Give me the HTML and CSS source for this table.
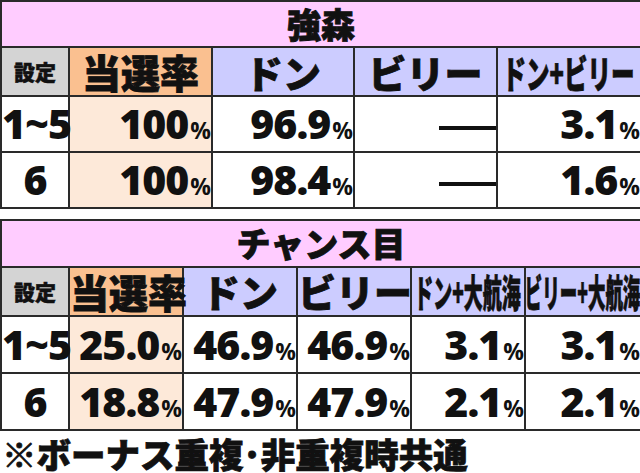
FILE: index.html
```html
<!DOCTYPE html>
<html lang="ja">
<head>
<meta charset="utf-8">
<link rel="stylesheet" href="styles.css">
</head>
<body>
<div class="page">
  <table class="tbl t1">
    <colgroup>
      <col class="c-set1"><col class="c-rate1"><col class="c-don1"><col class="c-bil1"><col class="c-db1">
    </colgroup>
    <tr class="r-title"><th colspan="5" class="title">強森</th></tr>
    <tr class="r-head">
      <th class="h-set">設定</th>
      <th class="h-rate">当選率</th>
      <th class="h-col">ドン</th>
      <th class="h-col">ビリー</th>
      <th class="h-col"><span class="sq sq1">ドン+ビリー</span></th>
    </tr>
    <tr class="r-data">
      <td class="set set-l">1~5</td>
      <td class="num rate r100">100<span class="pc">%</span></td>
      <td class="num">96.9<span class="pc">%</span></td>
      <td class="num dash"><span class="bar"></span></td>
      <td class="num">3.1<span class="pc">%</span></td>
    </tr>
    <tr class="r-data">
      <td class="set">6</td>
      <td class="num rate r100">100<span class="pc">%</span></td>
      <td class="num">98.4<span class="pc">%</span></td>
      <td class="num dash"><span class="bar"></span></td>
      <td class="num">1.6<span class="pc">%</span></td>
    </tr>
  </table>

  <table class="tbl t2">
    <colgroup>
      <col class="c-set2"><col class="c-rate2"><col class="c-don2"><col class="c-bil2"><col class="c-dk2"><col class="c-bk2">
    </colgroup>
    <tr class="r-title"><th colspan="6" class="title">チャンス目</th></tr>
    <tr class="r-head">
      <th class="h-set">設定</th>
      <th class="h-rate">当選率</th>
      <th class="h-col">ドン</th>
      <th class="h-col">ビリー</th>
      <th class="h-col"><span class="sq sq2">ドン+大航海</span></th>
      <th class="h-col"><span class="sq sq3">ビリー+大航海</span></th>
    </tr>
    <tr class="r-data">
      <td class="set set-l">1~5</td>
      <td class="num rate">25.0<span class="pc">%</span></td>
      <td class="num">46.9<span class="pc">%</span></td>
      <td class="num">46.9<span class="pc">%</span></td>
      <td class="num">3.1<span class="pc">%</span></td>
      <td class="num">3.1<span class="pc">%</span></td>
    </tr>
    <tr class="r-data">
      <td class="set">6</td>
      <td class="num rate">18.8<span class="pc">%</span></td>
      <td class="num">47.9<span class="pc">%</span></td>
      <td class="num">47.9<span class="pc">%</span></td>
      <td class="num">2.1<span class="pc">%</span></td>
      <td class="num">2.1<span class="pc">%</span></td>
    </tr>
  </table>

  <p class="note">※ボーナス重複･非重複時共通</p>
</div>
</body>
</html>
```

FILE: styles.css
```css
* { box-sizing: border-box; }
html, body { margin: 0; padding: 0; background: #fff; }
body {
  width: 640px;
  height: 473px;
  overflow: hidden;
  font-family: "Noto Sans CJK JP", "Noto Sans", sans-serif;
  color: #111;
}
.page {
  display: flex;
  flex-direction: column;
  gap: 10px;
}
.tbl {
  border-collapse: collapse;
  table-layout: fixed;
  width: 640px;
}
.tbl th, .tbl td {
  border: 2px solid #2a2a2a;
  padding: 0;
  white-space: nowrap;
}
.c-set1 { width: 68px; }
.c-rate1 { width: 143px; }
.c-don1 { width: 142px; }
.c-bil1 { width: 143px; }
.c-db1 { width: 144px; }

.c-set2 { width: 68px; }
.c-rate2 { width: 114px; }
.c-don2 { width: 114px; }
.c-bil2 { width: 114px; }
.c-dk2 { width: 114px; }
.c-bk2 { width: 116px; }

.title {
  background: #ffccff;
  font-weight: 900;
  font-size: 34px;
  line-height: 1.2;
  text-align: center;
  -webkit-text-stroke: 0.9px #111;
}
.t1 .r-title { height: 46px; }
.t2 .r-title { height: 47px; }
.r-head { height: 48px; }
.r-head th {
  font-weight: 900;
  line-height: 1.2;
  text-align: center;
  -webkit-text-stroke: 0.8px #111;
}
.h-set {
  background: #d4d4d4;
  font-size: 21px;
}
.r-head .h-set { -webkit-text-stroke: 0.5px #111; }
.h-rate {
  background: #fac090;
  font-size: 39px;
}
.h-col {
  background: #ccccff;
  font-size: 38px;
}
.sq {
  display: inline-block;
  transform-origin: center;
}
.sq1 { transform: scaleX(0.62); margin: 0 -42px; }
.sq2 { transform: scaleX(0.5); margin: 0 -62px; }
.sq3 { transform: scaleX(0.46); margin: 0 -72px; }

.t1 .r-data { height: 56px; }
.t2 .r-data { height: 57px; }
.r-data td {
  font-family: "Open Sans", "Noto Sans", sans-serif;
  font-weight: 800;
  font-size: 41px;
  line-height: 1.2;
  letter-spacing: -1px;
}
.set { text-align: center; background: #fff; }
.set-l { text-align: left; padding-left: 0; letter-spacing: -3px; }
.num {
  text-align: right;
  padding-right: 6px;
  background: #fff;
}
.rate { background: #fde9d9; }
.r100 { padding-right: 10px; }
.pc {
  font-size: 23px;
  font-weight: 700;
  letter-spacing: 0;
  margin-left: 2px;
}
.dash { padding-right: 16px; }
.bar {
  display: inline-block;
  width: 57px;
  height: 4px;
  background: #111;
  vertical-align: middle;
}
.note {
  margin: -10px 0 0 0;
  font-weight: 900;
  font-size: 34.5px;
  line-height: 44px;
  padding-left: 2px;
  letter-spacing: 0;
  -webkit-text-stroke: 0.8px #111;
}
```
